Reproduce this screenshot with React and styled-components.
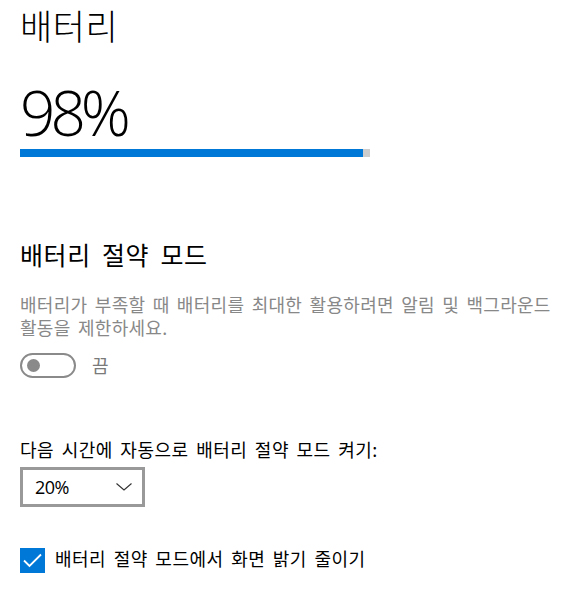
import React from "react";
import styled, { createGlobalStyle } from "styled-components";

const GlobalStyle = createGlobalStyle`
  html, body {
    margin: 0;
    padding: 0;
    background: #ffffff;
  }
  body {
    font-family: "Noto Sans CJK KR", "Noto Sans", sans-serif;
    color: #000000;
  }
`;

const Page = styled.main`
  display: flex;
  flex-direction: column;
  align-items: flex-start;
  padding: 4px 0 0 20px;
`;

const PageTitle = styled.h1`
  margin: 0;
  font-weight: 300;
  font-size: 35px;
  line-height: 42px;
  letter-spacing: 0.6px;
`;

const Percent = styled.div`
  margin-top: 31px;
  font-family: "Open Sans", "Noto Sans", sans-serif;
  font-weight: 300;
  font-size: 62px;
  line-height: 70px;
  letter-spacing: -5px;
`;

const Meter = styled.div`
  margin-top: 2px;
  width: 350px;
  height: 8px;
  background: #cccccc;
  display: flex;
`;

const MeterFill = styled.div`
  height: 100%;
  background: #0078d7;
`;

const SectionTitle = styled.h2`
  margin: 80px 0 0 0;
  font-weight: 400;
  font-size: 25px;
  line-height: 34px;
  letter-spacing: 0.6px;
  word-spacing: 5px;
`;

/* body copy shared by the paragraph, field label and checkbox text */
const Body = styled.span`
  font-size: 18px;
  line-height: 23px;
  letter-spacing: ${(p) => p.$tracking ?? 0.5}px;
  word-spacing: 3px;
  word-break: keep-all;
  color: ${(p) => p.$tone || "#000000"};
`;

const Description = styled(Body).attrs({ as: "p" })`
  margin: 22px 0 0 0;
  width: 546px;
`;

const ToggleRow = styled.div`
  margin-top: 14px;
  display: flex;
  align-items: center;
  gap: 16px;
`;

const Track = styled.div`
  box-sizing: border-box;
  width: 56px;
  height: 25px;
  border: 2px solid #8a8a8a;
  border-radius: 13px;
  display: flex;
  align-items: center;
  padding-left: 5px;
`;

const Knob = styled.span`
  width: 13px;
  height: 13px;
  border-radius: 50%;
  background: #8a8a8a;
`;

const FieldLabel = styled(Body).attrs({ as: "div" })`
  margin-top: 60px;
`;

const Select = styled.div`
  box-sizing: border-box;
  margin-top: 6px;
  width: 125px;
  height: 40px;
  border: 3px solid #999999;
  display: flex;
  align-items: center;
  justify-content: space-between;
  padding: 0 10px 0 12px;
  font-family: "Open Sans", "Noto Sans", sans-serif;
  font-size: 18px;
  letter-spacing: -0.5px;
`;

const CheckRow = styled.label`
  margin-top: 41px;
  display: flex;
  align-items: flex-start;
  gap: 10px;
`;

const CheckBox = styled.span`
  width: 25px;
  height: 25px;
  background: #0078d7;
  display: flex;
  align-items: center;
  justify-content: center;
`;

const CheckText = styled(Body)`
  margin-top: -1px;
`;

const Chevron = () => (
  <svg width="16" height="8" viewBox="0 0 16 8" fill="none">
    <path d="M0.5 0.5 L8 7 L15.5 0.5" stroke="#333" strokeWidth="1.1" />
  </svg>
);

const Check = () => (
  <svg width="19" height="15" viewBox="0 0 19 15" fill="none">
    <path d="M1 7.5 L6.5 13 L18 1.5" stroke="#fff" strokeWidth="1.8" />
  </svg>
);

export default function App() {
  const level = 98;
  return (
    <>
      <GlobalStyle />
      <Page>
        <PageTitle>배터리</PageTitle>
        <Percent>{level}%</Percent>
        <Meter>
          <MeterFill style={{ width: `${level}%` }} />
        </Meter>

        <SectionTitle>배터리 절약 모드</SectionTitle>
        <Description $tone="#888888" $tracking={0.3}>
          배터리가 부족할 때 배터리를 최대한 활용하려면 알림 및 백그라운드
          활동을 제한하세요.
        </Description>
        <ToggleRow>
          <Track>
            <Knob />
          </Track>
          <Body $tone="#7a7a7a">끔</Body>
        </ToggleRow>

        <FieldLabel>다음 시간에 자동으로 배터리 절약 모드 켜기:</FieldLabel>
        <Select>
          <span>20%</span>
          <Chevron />
        </Select>

        <CheckRow>
          <CheckBox>
            <Check />
          </CheckBox>
          <CheckText>배터리 절약 모드에서 화면 밝기 줄이기</CheckText>
        </CheckRow>
      </Page>
    </>
  );
}
